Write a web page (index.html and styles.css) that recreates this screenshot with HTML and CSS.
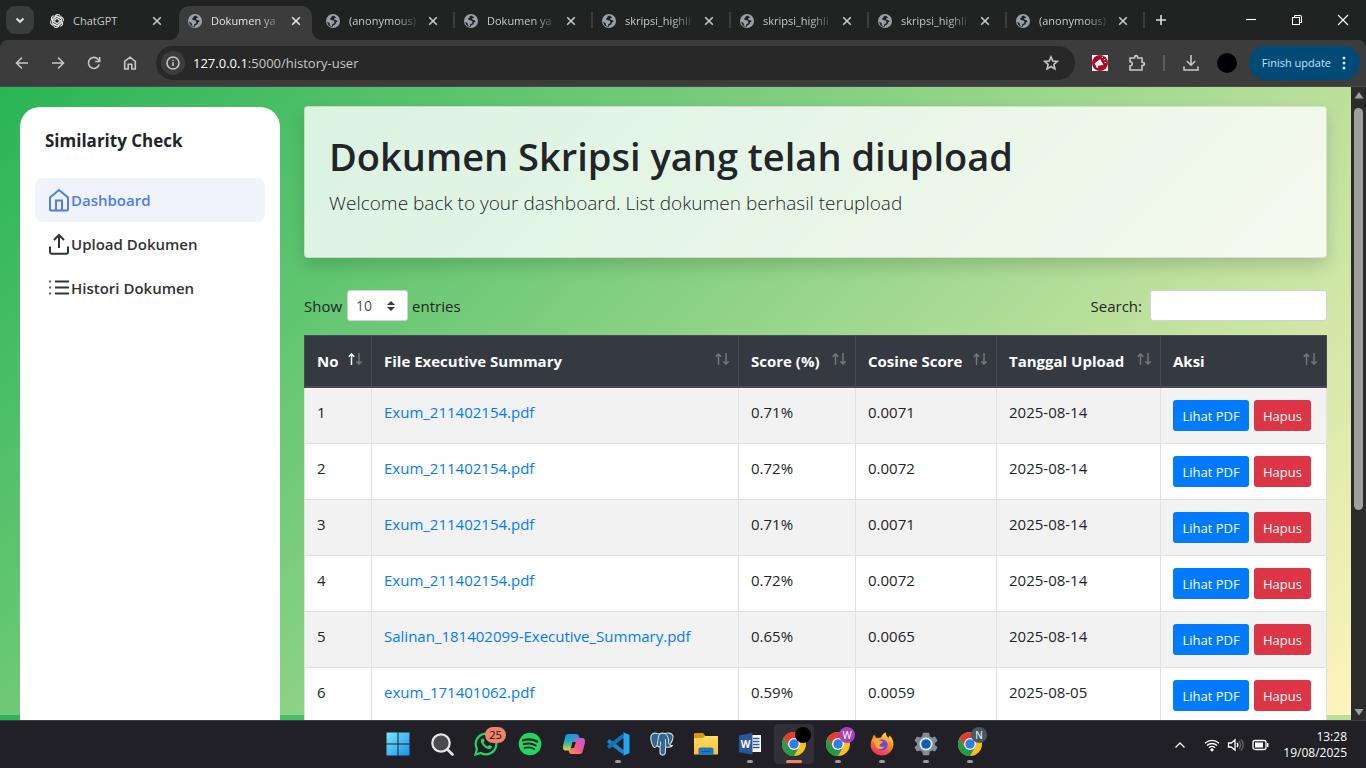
FILE: index.html
```html
<!DOCTYPE html>
<html lang="id">
<head>
<meta charset="utf-8">
<title>Dokumen yang telah diupload</title>
<link rel="stylesheet" href="styles.css">
</head>
<body>
<svg class="sprite" aria-hidden="true">
  <defs>
    <linearGradient id="g-copilot-a" x1="0" y1="0" x2="0" y2="1"><stop offset="0" stop-color="#1d8ff0"/><stop offset=".5" stop-color="#22b5b0"/><stop offset="1" stop-color="#f3cf28"/></linearGradient>
    <linearGradient id="g-copilot-b" x1="1" y1="0" x2="0" y2="1"><stop offset="0" stop-color="#b45cf0"/><stop offset=".5" stop-color="#f0568c"/><stop offset="1" stop-color="#fb9d4b"/></linearGradient>
    <linearGradient id="g-win" x1="0" y1="0" x2="1" y2="1"><stop offset="0" stop-color="#7fe6fb"/><stop offset="1" stop-color="#1590ea"/></linearGradient>
    <linearGradient id="g-folder" x1="0" y1="0" x2="0" y2="1"><stop offset="0" stop-color="#ffdc68"/><stop offset="1" stop-color="#fbc02d"/></linearGradient>
    <linearGradient id="g-fox" x1=".8" y1="0" x2=".3" y2="1"><stop offset="0" stop-color="#ffe14a"/><stop offset=".45" stop-color="#ff8a1f"/><stop offset="1" stop-color="#f0256b"/></linearGradient>
  </defs>
  <symbol id="globe" viewBox="0 0 14 14">
    <circle cx="7" cy="7" r="7" fill="#9aa0aa"/>
    <path d="M7.500 1.500 5.200 2.700 5.400 3.800 4 4.600 4.800 6l2.800.6.9 1.500-.5 1.500-1.700.5-.4 2.500-1.800-1L3.500 9 1.300 7.700c.1 2.900 2.300 5.100 5 5.200l1.200-1.700 2-.9.600-2 1.600-.5-.8-1.400L8.300 5.600 8 4.400l2.300-.9z" fill="#202322"/>
  </symbol>
  <symbol id="close" viewBox="0 0 12 12"><path d="m2.200 2.200 7.600 7.600M9.800 2.200 2.200 9.800" stroke="currentColor" stroke-width="1.600" fill="none"/></symbol>
  <symbol id="sort" viewBox="0 0 14 12"><path class="up" d="M3.500 12V1M.8 3.800 3.500 1l2.700 2.800" /><path class="down" d="M11 0v11M8.300 8.200 11 11l2.700-2.800"/></symbol>
  <symbol id="chrome" viewBox="0 0 24 24">
    <circle cx="12" cy="12" r="12" fill="#fbc116"/>
    <path d="M12 12 6.800 15 1.600 6A12 12 0 0 1 22.400 6H12z" fill="#e33b2e"/>
    <path d="M1.600 6A12 12 0 0 0 12 24l5.200-9L12 12l-5.200 3z" fill="#229a49"/>
    <circle cx="12" cy="12" r="6" fill="#fff"/><circle cx="12" cy="12" r="4.700" fill="#2f7de9"/>
  </symbol>
</svg>

<header class="browser">
  <div class="tabstrip">
    <button class="tab-search" aria-label="Search tabs"><svg width="12" height="12" viewBox="0 0 12 12"><path d="m2.500 4.500 3.500 3.300 3.500-3.300"/></svg></button>
    <div class="tabs">
      <div class="tab"><svg class="favicon" viewBox="1 1 14 14"><g fill="none" stroke="#e4e4e4" stroke-width="1.100"><path id="petal" d="M5.800 9.300V4.200A2.900 2.900 0 0 1 11.200 3M5.800 4.600l2.400-1.400 4.200 2.400"/><use href="#petal" transform="rotate(60 8 8)"/><use href="#petal" transform="rotate(120 8 8)"/><use href="#petal" transform="rotate(180 8 8)"/><use href="#petal" transform="rotate(240 8 8)"/><use href="#petal" transform="rotate(300 8 8)"/></g></svg><span class="tab-title">ChatGPT</span><button class="tab-close" aria-label="Close"><svg><use href="#close"/></svg></button></div>
      <div class="tab active"><svg class="favicon"><use href="#globe"/></svg><span class="tab-title fade">Dokumen ya</span><button class="tab-close" aria-label="Close"><svg><use href="#close"/></svg></button></div>
      <div class="tab divided"><svg class="favicon"><use href="#globe"/></svg><span class="tab-title fade">(anonymous)</span><button class="tab-close" aria-label="Close"><svg><use href="#close"/></svg></button></div>
      <div class="tab divided"><svg class="favicon"><use href="#globe"/></svg><span class="tab-title fade">Dokumen ya</span><button class="tab-close" aria-label="Close"><svg><use href="#close"/></svg></button></div>
      <div class="tab divided"><svg class="favicon"><use href="#globe"/></svg><span class="tab-title fade">skripsi_highli</span><button class="tab-close" aria-label="Close"><svg><use href="#close"/></svg></button></div>
      <div class="tab divided"><svg class="favicon"><use href="#globe"/></svg><span class="tab-title fade">skripsi_highli</span><button class="tab-close" aria-label="Close"><svg><use href="#close"/></svg></button></div>
      <div class="tab divided"><svg class="favicon"><use href="#globe"/></svg><span class="tab-title fade">skripsi_highli</span><button class="tab-close" aria-label="Close"><svg><use href="#close"/></svg></button></div>
      <div class="tab divided"><svg class="favicon"><use href="#globe"/></svg><span class="tab-title fade">(anonymous)</span><button class="tab-close" aria-label="Close"><svg><use href="#close"/></svg></button></div>
    </div>
    <button class="new-tab" aria-label="New tab"><svg width="12" height="12" viewBox="0 0 12 12"><path d="M6 1v10M1 6h10"/></svg></button>
    <div class="window-controls">
      <button aria-label="Minimize"><svg viewBox="0 0 12 12"><path d="M1 5.500h10"/></svg></button>
      <button aria-label="Restore"><svg viewBox="0 0 12 12"><path d="M1.500 3.500h7v7h-7zM3.500 3.500v-1.500a.5.500 0 0 1 .5-.5h5a1.500 1.500 0 0 1 1.500 1.500v5.500h-2"/></svg></button>
      <button aria-label="Close window"><svg viewBox="0 0 12 12"><path d="m1 1 10 10M11 1 1 11"/></svg></button>
    </div>
  </div>
  <div class="toolbar">
    <nav class="nav-buttons">
      <button aria-label="Back"><svg viewBox="0 0 16 16"><path d="M14 8H2.500M8 2.500 2.500 8 8 13.500"/></svg></button>
      <button aria-label="Forward"><svg viewBox="0 0 16 16"><path d="M2 8h11.500M8 2.500 13.500 8 8 13.500"/></svg></button>
      <button aria-label="Reload"><svg viewBox="0 0 16 16"><path d="M13.200 9.500A5.500 5.500 0 1 1 12 4.200L13.500 6M13.700 2v4.500H9.200"/></svg></button>
      <button aria-label="Home"><svg viewBox="0 0 16 16"><path d="M2.700 14V6.500L8 2.200l5.300 4.300V14H9.800V9.300H6.200V14z"/></svg></button>
    </nav>
    <div class="omnibox">
      <button class="site-info" aria-label="Site information"><svg width="16" height="16" viewBox="0 0 16 16"><circle cx="8" cy="8" r="6"/><path d="M8 7.300v3.700M8 4.700v1.400"/></svg></button>
      <div class="url"><b>127.0.0.1</b>:5000/history-user</div>
      <button class="star" aria-label="Bookmark"><svg width="16" height="16" viewBox="0 0 16 16"><path d="m8 1.800 1.800 4.200 4.500.4-3.400 3 1 4.500L8 11.500l-3.900 2.400 1-4.500-3.400-3 4.500-.4z"/></svg></button>
    </div>
    <div class="toolbar-right">
      <button class="ext" aria-label="Extension"><svg width="16" height="16" viewBox="0 0 16 16"><path fill="#fff" d="M0 0h16v16H0z"/><circle cx="8" cy="8" r="8" fill="#b0062d"/><path fill="#fff" d="m2.500 8.500 5.700-4.600 3.300 6.200-5.700.7.600 1.700-1.700.4-.8-2z"/><path d="m10 3 .8-1.500M11.800 5l1.600-.8M12.500 7.500h1.800" stroke="#fff"/></svg></button>
      <button class="ext" aria-label="Extensions"><svg width="18" height="18" viewBox="0 0 18 18"><path d="M2 4h4.500c0-3.200 3.200-3.200 3.200 0H14v4.300c3.200 0 3.200 3.200 0 3.200V16H2v-4c3-.3 3-4 0-4.200z"/></svg></button>
      <span class="bar"></span>
      <button class="ext" aria-label="Downloads"><svg width="18" height="18" viewBox="0 0 18 18"><path d="M9 1v10M4.800 7 9 11.200 13.200 7M2 12.500V16h14v-3.500"/></svg></button>
      <button class="avatar" aria-label="Profile"></button>
      <button class="update">Finish update <svg width="4" height="16" viewBox="0 0 4 16"><circle cx="2" cy="3" r="1.500"/><circle cx="2" cy="8" r="1.500"/><circle cx="2" cy="13" r="1.500"/></svg></button>
    </div>
  </div>
</header>

<div class="viewport">
  <div class="page">
    <aside class="sidebar">
      <h2 class="brand">Similarity Check</h2>
      <nav class="menu">
        <a class="menu-item current" href="#dashboard"><svg viewBox="0 0 22 24"><path d="M2 9.500 11 2l9 7.500V21a1.500 1.500 0 0 1-1.500 1.500h-15A1.500 1.500 0 0 1 2 21zM8 22V12.500h6V22"/></svg>Dashboard</a>
        <a class="menu-item" href="#upload"><svg viewBox="0 0 22 24"><path d="M2 14.500V20a1.700 1.700 0 0 0 1.700 1.700h14.600A1.700 1.700 0 0 0 20 20v-5.500M11 16V3M6 8l5-5 5 5"/></svg>Upload Dokumen</a>
        <a class="menu-item" href="#histori"><svg viewBox="0 0 22 24"><path d="M7 5.500h14M7 11.500h14M7 17.500h14M1.200 5.500h1.600M1.200 11.500h1.600M1.200 17.500h1.600"/></svg>Histori Dokumen</a>
      </nav>
    </aside>
    <main class="content">
      <section class="hero">
        <h1>Dokumen Skripsi yang telah diupload</h1>
        <p>Welcome back to your dashboard. List dokumen berhasil terupload</p>
      </section>
      <div class="controls">
        <label class="length">Show <span class="select-wrap"><select><option>10</option><option>25</option></select><svg width="8" height="10" viewBox="0 0 8 10"><path d="M4 0 8 4H0zM4 10 0 6h8z"/></svg></span> entries</label>
        <label class="search">Search: <input type="search"></label>
      </div>
      <table class="docs">
        <colgroup><col class="c-no"><col><col class="c-score"><col class="c-cosine"><col class="c-date"><col class="c-action"></colgroup>
        <thead>
          <tr>
            <th class="asc">No<svg><use href="#sort"/></svg></th>
            <th>File Executive Summary<svg><use href="#sort"/></svg></th>
            <th>Score (%)<svg><use href="#sort"/></svg></th>
            <th>Cosine Score<svg><use href="#sort"/></svg></th>
            <th>Tanggal Upload<svg><use href="#sort"/></svg></th>
            <th>Aksi<svg><use href="#sort"/></svg></th>
          </tr>
        </thead>
        <tbody>
          <tr><td>1</td><td><a href="#1">Exum_211402154.pdf</a></td><td>0.71%</td><td>0.0071</td><td>2025-08-14</td><td><div class="actions"><button class="btn view">Lihat PDF</button><button class="btn delete">Hapus</button></div></td></tr>
          <tr><td>2</td><td><a href="#2">Exum_211402154.pdf</a></td><td>0.72%</td><td>0.0072</td><td>2025-08-14</td><td><div class="actions"><button class="btn view">Lihat PDF</button><button class="btn delete">Hapus</button></div></td></tr>
          <tr><td>3</td><td><a href="#3">Exum_211402154.pdf</a></td><td>0.71%</td><td>0.0071</td><td>2025-08-14</td><td><div class="actions"><button class="btn view">Lihat PDF</button><button class="btn delete">Hapus</button></div></td></tr>
          <tr><td>4</td><td><a href="#4">Exum_211402154.pdf</a></td><td>0.72%</td><td>0.0072</td><td>2025-08-14</td><td><div class="actions"><button class="btn view">Lihat PDF</button><button class="btn delete">Hapus</button></div></td></tr>
          <tr><td>5</td><td><a href="#5">Salinan_181402099-Executive_Summary.pdf</a></td><td>0.65%</td><td>0.0065</td><td>2025-08-14</td><td><div class="actions"><button class="btn view">Lihat PDF</button><button class="btn delete">Hapus</button></div></td></tr>
          <tr><td>6</td><td><a href="#6">exum_171401062.pdf</a></td><td>0.59%</td><td>0.0059</td><td>2025-08-05</td><td><div class="actions"><button class="btn view">Lihat PDF</button><button class="btn delete">Hapus</button></div></td></tr>
        </tbody>
      </table>
    </main>
  </div>
  <div class="scrollbar" aria-hidden="true">
    <svg viewBox="0 0 10 8"><path d="M5 1 9.500 7.500h-9z"/></svg>
    <div class="track"><div class="thumb"></div></div>
    <svg viewBox="0 0 10 8"><path d="M5 7.500.5 1h9z"/></svg>
  </div>
</div>

<footer class="taskbar">
  <div class="apps">
    <button class="app" aria-label="Start"><svg viewBox="0 0 24 24"><path fill="url(#g-win)" d="M.5.500h11v11H.5zM12.500.500h11v11h-11zM.5 12.500h11v11H.5zM12.500 12.500h11v11h-11z"/></svg></button>
    <button class="app" aria-label="Search"><svg viewBox="0 0 24 24"><circle cx="11" cy="11" r="8.700" fill="#4a4a50" stroke="#e6e6e6" stroke-width="2.200"/><path d="m17.500 17.500 5 5" stroke="#e6e6e6" stroke-width="2.600" stroke-linecap="round"/></svg></button>
    <button class="app" aria-label="WhatsApp"><svg viewBox="0 0 24 24"><path d="M1.500 22.500 3 17a10.300 10.300 0 1 1 4 4z" fill="#202026" stroke="#25d366" stroke-width="2.200"/><path d="M8.500 6.500c-1.800.5-2.200 3-.6 5.500 1.800 3 4.700 5.200 7.600 5 1.700-.1 2.700-1.800 2.400-2.800l-2.700-1.300-1.500 1.500c-2-.7-3.300-2-4.100-3.800l1.100-1.500-1.200-2.600z" fill="#25d366"/></svg><span class="badge count">25</span></button>
    <button class="app" aria-label="Spotify"><svg viewBox="0 0 24 24"><circle cx="12" cy="12" r="11.300" fill="#1ed760"/><g fill="none" stroke="#202026" stroke-linecap="round"><path d="M5 8.300c5-1.500 10-1 14.200 1.300" stroke-width="2.300"/><path d="M5.700 12.300c4.200-1.200 8.400-.8 12 1.200" stroke-width="2"/><path d="M6.300 16c3.600-1 7-.6 10 1" stroke-width="1.700"/></g></svg></button>
    <button class="app" aria-label="Copilot"><svg viewBox="0 0 24 24"><path fill="url(#g-copilot-a)" d="M6 2h8c2 0 2.800 1 3.300 3l.5 1.500h-3c-1.800 0-2.400 1-3 3L9.500 16c-.5 2-1.500 2.500-3.500 2.500H3.500C1 18.500.500 16 1.200 13l2-8C3.800 3 4.500 2 6 2z"/><path fill="url(#g-copilot-b)" d="M18 22h-8c-2 0-2.800-1-3.300-3l-.2-.8c2 0 2.700-.7 3.200-2.500L12 8.500c.5-2 1.200-2.500 3.200-2.500h5c2.800 0 3.300 2.500 2.600 5.500l-2 7.500c-.6 2-1.300 3-2.800 3z"/><path d="m10.500 10-1.700 6h3.200l1.900-6h-2.500z" fill="#202026"/></svg></button>
    <button class="app running" aria-label="VS Code"><svg viewBox="0 0 24 24"><path d="M2 8.500 17.500 20.500" stroke="#1787d3" stroke-width="3.800"/><path d="M2 15.500 17.500 3.500" stroke="#0d74bd" stroke-width="3.800"/><path fill="#2ba4ef" d="M17.500.300 23.500 3v18l-6 2.700z"/></svg></button>
    <button class="app" aria-label="pgAdmin"><svg viewBox="0 0 24 24"><path fill="#336791" stroke="#d8dee6" stroke-width="1.100" stroke-linejoin="round" d="M7 1.500C3 .300.500 2.500.800 6.500c.2 3 1.700 8.500 3.500 9 1.300.3 2.300-1.300 3-2 .5 1 1.700 1.500 2.700 1.300v6c.3 3 4.600 3 5.200.3l.5-6.300c1.800.8 5 .5 6.800-1.300-1.600.2-2.500-.1-2.500-.7 2-3 3.300-7.500 2.800-9.300C21.800.800 17.500.500 15 1.500c-2-.7-3.500-.5-5 .3z"/><path d="M10 1.800C7.500 4 8.500 8 7.500 11c-.3 1-.2 2-.2 2.500M15 1.500c3 2 4 6 3.500 8.500-.5 1.500.5 2 1.500 2.500M15.500 7c-.7 2 .8 4-.2 7.500M10 14.500c1-1.500.6-3 .5-5" fill="none" stroke="#d8dee6" stroke-width="1"/></svg></button>
    <button class="app" aria-label="File Explorer"><svg viewBox="0 0 24 24"><path fill="#d9960c" d="M0 2a1 1 0 0 1 1-1h8l2.500 3H23a1 1 0 0 1 1 1v4H0z"/><path fill="url(#g-folder)" d="M0 6h9l2-2h13v18.500H0z"/><path fill="#1479cc" d="M4.500 22.500v-5a2 2 0 0 1 2-2h11a2 2 0 0 1 2 2v5z"/><path stroke="#0d559a" d="M7.500 19.500h9"/></svg></button>
    <button class="app running" aria-label="Word"><svg viewBox="0 0 24 24"><path fill="#fff" d="M12 3h11v17H12z"/><path d="M15 6.500h6.500M15 9.500h6.500M15 12.500h6.500M15 15.500h6.500" stroke="#2b579a" stroke-width="1.300"/><path fill="#2a569c" d="M1 3.500 14.500.800v22L1 20.300z"/><text x="2.800" y="15.500" class="word-w">W</text></svg></button>
    <button class="app running focused" aria-label="Chrome"><svg><use href="#chrome"/></svg><span class="badge black"></span></button>
    <button class="app running" aria-label="Chrome W"><svg><use href="#chrome"/></svg><span class="badge purple">W</span></button>
    <button class="app running" aria-label="Firefox"><svg viewBox="0 0 24 24"><path fill="url(#g-fox)" d="M4 2.500 6.500 6 11 5.500C12 2.500 14 1 16 .500c-.3 2.500 1 4 2.500 5.500L19.500 3.500C22.500 6 23.700 9 23.500 12.500 23 19 18 23.500 12 23.500S.8 19 .6 13C.500 9.500 2.500 6 4 2.500z"/><circle cx="12" cy="13" r="5.600" fill="#7045e5"/><path fill="#ffac2c" d="M1.500 8c4-2 7-1 8.500.8l3 .7c-.8 2-3 1.800-3.500 3.200-.3 1.600 2 2.700 5 1.800-1.500 2.800-5.300 3.500-8 1C4.500 13 4.800 10 1.500 8z"/></svg></button>
    <button class="app running" aria-label="Settings"><svg viewBox="0 0 24 24"><path fill="#838c96" d="M9 .800h6l.8 3.400 2 1.200 3.300-1 2.500 4.300L21 11v2l2.600 2.300-2.500 4.300-3.300-1-2 1.200-.8 3.400H9l-.8-3.400-2-1.200-3.300 1-2.500-4.300L3 13v-2L.4 8.700l2.500-4.300 3.300 1 2-1.200z"/><circle cx="12" cy="12" r="6.500" fill="#e8edf2"/><circle cx="12" cy="12" r="4.800" fill="#0e63b0"/></svg></button>
    <button class="app running" aria-label="Chrome N"><svg><use href="#chrome"/></svg><span class="badge slate">N</span></button>
  </div>
  <div class="tray">
    <button aria-label="Show hidden icons"><svg width="12" height="16" viewBox="0 0 12 16"><path d="m1.500 10.500 4.500-4.500 4.500 4.500"/></svg></button>
    <button class="status" aria-label="Network, volume, battery">
      <svg width="16" height="16" viewBox="0 0 16 16"><path d="M1 6.200a10.200 10.200 0 0 1 14 0M3 8.500a7.200 7.200 0 0 1 10 0M5 10.700a4.300 4.300 0 0 1 6 0"/><circle cx="8" cy="12.800" r="1" fill="#fff"/></svg>
      <svg width="18" height="16" viewBox="0 0 18 16"><path d="M1.500 6h2.700L8 2.800v10.400L4.200 10H1.500zM10 6a3 3 0 0 1 0 4"/><path class="dim" d="M12 4.200a5.500 5.500 0 0 1 0 7.600M14 2.500a8 8 0 0 1 0 11"/></svg>
      <svg width="18" height="16" viewBox="0 0 18 16"><rect x="1" y="3.500" width="13" height="9" rx="2"/><path fill="#fff" stroke="none" d="M3 5.500h8v5H3zM15 6h1.500v4H15z"/></svg>
    </button>
    <div class="clock">13:28<br>19/08/2025</div>
  </div>
</footer>
</body>
</html>
```
FILE: styles.css
```css
* { box-sizing: border-box; }

body {
  margin: 0;
  height: 100vh;
  display: flex;
  flex-direction: column;
  overflow: hidden;
  background: #202026;
  color: #212529;
  font: 15px/24px "Open Sans", "Noto Sans", sans-serif;
}

button {
  border: 0;
  padding: 0;
  background: none;
  color: inherit;
  font: inherit;
}

.sprite { position: absolute; width: 0; height: 0; }

/* Browser frame */
.browser { flex: none; background: #202322; color: #c7c9c8; }

.tabstrip { display: flex; align-items: center; height: 40px; padding-left: 6px; }

.tab-search {
  display: grid;
  place-items: center;
  width: 28px;
  height: 28px;
  margin-right: 7px;
  border-radius: 9px;
  background: #3b3d3c;
}
.tab-search path, .new-tab path { fill: none; stroke: #e0e0e0; stroke-width: 2; }

.tabs { display: flex; align-self: stretch; flex: 0 1 1104px; min-width: 0; padding-top: 6px; }

.tab {
  position: relative;
  display: flex;
  align-items: center;
  flex: 0 1 138px;
  min-width: 0;
  padding: 0 16px 5px 9px;
  font-size: 11px;
}
.tab.active {
  flex-basis: 133px;
  margin-right: 5px;
  padding-right: 10px;
  border-radius: 10px 10px 0 0;
  background: #3c3c3c;
  color: #e3e3e3;
}
.tab.active::before, .tab.active::after {
  content: "";
  position: absolute;
  bottom: 0;
  width: 10px;
  height: 10px;
}
.tab.active::before { left: -10px; background: radial-gradient(circle at 0 0, transparent 10px, #3c3c3c 10px); }
.tab.active::after { right: -10px; background: radial-gradient(circle at 100% 0, transparent 10px, #3c3c3c 10px); }
.tab.divided::after {
  content: "";
  position: absolute;
  right: 0;
  top: 6px;
  width: 2px;
  height: 16px;
  background: #3c3f3e;
}

.favicon { flex: none; width: 14px; height: 14px; margin-right: 9px; }

.tab-title { flex: 1 1 0; min-width: 0; white-space: nowrap; }
.fade { mask-image: linear-gradient(to right, #000 60%, rgba(0, 0, 0, .2) 85%); }
.tab-close { display: grid; flex: none; }
.tab-close svg { width: 12px; height: 12px; }

.new-tab { display: grid; padding: 4px 10px; }
.new-tab path { stroke-width: 1.600; }

.window-controls { display: flex; margin-left: auto; }
.window-controls button { display: grid; place-items: center; width: 46px; height: 40px; }
.window-controls svg { width: 12px; height: 12px; }
.window-controls path { fill: none; stroke: #fff; stroke-width: 1.100; }

.toolbar {
  display: flex;
  align-items: center;
  height: 47px;
  padding: 0 6px 1px 4px;
  border-bottom: 1px solid #4a4a4a;
  border-radius: 8px 8px 0 0;
  background: #3c3c3c;
}
.nav-buttons { display: flex; }
.nav-buttons button { display: grid; place-items: center; width: 36px; height: 34px; }
.nav-buttons svg { width: 16px; height: 16px; }
.nav-buttons path, .star path, .site-info svg, .ext > svg > path:only-child { fill: none; stroke: #c7c7c7; stroke-width: 1.600; }

.omnibox {
  display: flex;
  flex: 1;
  align-items: center;
  height: 34px;
  margin-left: 8px;
  padding: 0 16px 0 5px;
  border-radius: 17px;
  background: #282828;
}
.site-info { display: grid; place-items: center; width: 24px; height: 24px; border-radius: 12px; background: #3c3c3c; }
.url { flex: 1; margin-left: 8px; font-size: 13px; color: #c7c7c7; }
.url b { color: #fff; font-weight: 400; }
.star { display: grid; }

.toolbar-right { display: flex; align-items: center; gap: 17px; margin-left: 17px; }
.ext { display: grid; }
.ext + .ext { margin-left: 3px; }
.bar { width: 2px; height: 16px; background: #5c5c5c; }
.avatar { width: 20px; height: 20px; border-radius: 50%; background: #020006; }
.update {
  display: flex;
  align-items: center;
  gap: 11px;
  height: 34px;
  margin-left: -5px;
  padding: 0 14px 0 13px;
  border-radius: 17px;
  background: #004a77;
  color: #c2e7ff;
  font-size: 11px;
}
.update svg { fill: #c2e7ff; }

/* Web page */
.viewport { display: flex; flex: 1; min-height: 0; overflow: hidden; }

.page {
  display: flex;
  flex: 1;
  gap: 24px;
  min-width: 0;
  padding: 0 24px 0 20px;
  overflow: hidden;
  background: linear-gradient(135deg, #29b555, #fff4bd) 0 0 / 100% 628px;
}

.sidebar {
  flex: 0 0 260px;
  margin-top: 20px;
  padding: 20px 15px;
  border-radius: 20px 20px 0 0;
  background: #fff;
}
.brand { margin: 0 0 24px; padding-left: 10px; font-size: 17px; line-height: 27px; font-weight: 700; }
.menu { display: flex; flex-direction: column; }
.menu-item {
  display: flex;
  align-items: center;
  height: 44px;
  padding: 0 13px;
  border-radius: 8px;
  color: #333;
  font-weight: 600;
  text-decoration: none;
}
.menu-item svg { width: 22px; height: 24px; margin-right: 1px; fill: none; stroke: currentColor; stroke-width: 2; }
.menu-item.current { background: #f0f4fa; color: #4f7df0; }

.content { flex: 1; min-width: 0; padding-top: 19px; }

.hero {
  margin-bottom: 32px;
  padding: 25px 24px 39px;
  border: 1px solid rgba(0, 0, 0, .1);
  border-radius: 4px;
  background: rgba(255, 255, 255, .8);
  box-shadow: 0 8px 16px rgba(0, 0, 0, .15);
}
.hero h1 { margin: 0 0 8px; font-size: 38px; line-height: 48px; font-weight: 600; }
.hero p { margin: 0; font-size: 19px; line-height: 30px; font-weight: 300; }

.controls { display: flex; justify-content: space-between; margin-bottom: 14px; }
.controls label { display: flex; align-items: center; }
.select-wrap { position: relative; display: flex; margin: 0 4px 0 5px; }
.select-wrap select {
  appearance: none;
  width: 61px;
  height: 31px;
  padding: 0 8px;
  border: 1px solid #ced4da;
  border-radius: 3px;
  background: #fff;
  color: #495057;
  font: 14px "Open Sans", sans-serif;
}
.select-wrap svg { position: absolute; right: 13px; top: 11px; fill: #343a40; }
.search input { width: 177px; height: 31px; margin-left: 8px; border: 1px solid #ced4da; border-radius: 3px; background: #fff; }

.docs { width: 100%; table-layout: fixed; border-collapse: collapse; background: #fff; }
.c-no { width: 67px; }
.c-score { width: 117px; }
.c-cosine { width: 141px; }
.c-date { width: 164px; }
.c-action { width: 166px; }
.docs th, .docs td { padding: 12px; border: 1px solid #dee2e6; text-align: left; vertical-align: top; }
.docs th {
  position: relative;
  padding: 13px 12px;
  border-color: #454d55;
  border-bottom-width: 2px;
  background: #343a40;
  color: #fff;
  font-weight: 700;
  white-space: nowrap;
}
.docs th svg { position: absolute; right: 9px; top: 17px; width: 14px; height: 12px; fill: none; stroke: #73777b; stroke-width: 1.500; }
.up { stroke: var(--up, #73777b); }
.asc { --up: #fff; }
.docs tbody tr:nth-child(odd) { background: #f2f2f2; }
.docs a { color: #007bff; text-decoration: none; }

.actions { display: flex; gap: 5px; }
.btn { height: 31px; border-radius: 3px; color: #fff; font-size: 13px; white-space: nowrap; }
.view { width: 76px; background: #007bff; }
.delete { width: 57px; background: #dc3545; }

.scrollbar { display: flex; flex: 0 0 15px; flex-direction: column; align-items: center; justify-content: space-between; padding: 4px 0; background: #2b2b2b; }
.scrollbar svg { width: 10px; height: 8px; fill: #9f9f9f; }
.track { flex: 1; padding: 9px 0; }
.thumb { width: 9px; height: 68%; border-radius: 5px; background: #9f9f9f; }

/* Taskbar */
.taskbar {
  display: grid;
  flex: none;
  grid-template-columns: 1fr auto 1fr;
  align-items: center;
  height: 48px;
  border-top: 1px solid #3c3f42;
  background: #202026;
  color: #fff;
}
.apps { grid-column: 2; display: flex; padding-left: 2px; }
.app { position: relative; display: grid; place-items: center; width: 44px; height: 47px; padding-bottom: 2px; }
.app > svg { z-index: 1; width: 24px; height: 24px; }
.running::after {
  content: "";
  position: absolute;
  left: 19px;
  bottom: 5px;
  width: 6px;
  height: 3px;
  border-radius: 2px;
  background: #9a9a9e;
}
.focused::before { content: ""; position: absolute; inset: 3px 2px 4px; border-radius: 4px; background: #303036; }
.focused::after { left: 14px; width: 16px; background: #f2836b; }
.badge {
  position: absolute;
  z-index: 2;
  left: 23px;
  top: 6px;
  width: 16px;
  height: 16px;
  border-radius: 8px;
  font-size: 10px;
  line-height: 16px;
  text-align: center;
}
.count { left: 21px; width: 21px; background: #f2836b; color: #111; font-size: 11px; }
.black { background: #000; }
.purple { background: #a642b8; }
.slate { background: #455a64; }
.word-w { fill: #fff; font: 700 10px "Open Sans", sans-serif; }

.tray { display: flex; align-items: center; justify-content: flex-end; padding-right: 19px; }
.tray svg { display: block; fill: none; stroke: #fff; stroke-width: 1.300; }
.tray .dim { stroke: #6a6a70; }
.status { display: flex; gap: 7px; margin: 0 13px 0 18px; }
.clock { font-size: 12px; line-height: 16px; text-align: right; }
```
